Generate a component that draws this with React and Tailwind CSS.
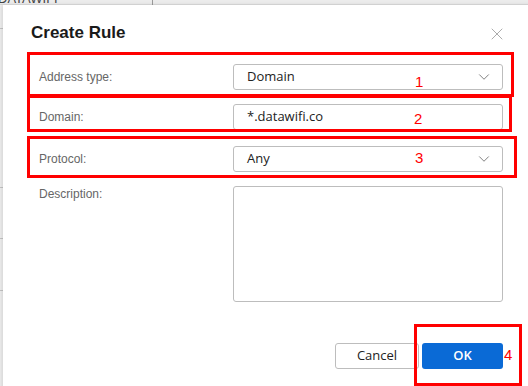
import { ChevronDown, X } from 'lucide-react';

const LABEL = 'w-[194px] shrink-0 text-[12px] text-[#666] font-["Liberation_Sans",Arial,sans-serif]';
const FIELD = 'w-[270px] h-[26px] rounded-[3px] border border-[#bdbdbd] bg-white flex items-center px-[13px] text-[13px] text-[#222] font-["Open_Sans","Noto_Sans",sans-serif]';

function Mark({ className, n, numClass }) {
  return (
    <div className={`absolute border-[3px] border-[#ff0000] pointer-events-none ${className}`}>
      <span className={`absolute text-[15px] leading-none text-[#ff0000] font-["Liberation_Sans",Arial,sans-serif] ${numClass}`}>{n}</span>
    </div>
  );
}

function SelectBox({ value }) {
  return (
    <div className={`${FIELD} justify-between`}>
      <span>{value}</span>
      <ChevronDown size={18} strokeWidth={1.1} className="text-[#666] mr-[-4px]" />
    </div>
  );
}

export default function App() {
  return (
    <div className="relative w-[528px] h-[386px] overflow-hidden bg-[#f3f3f3]">
      {/* page behind the dialog */}
      <div className="absolute left-0 top-0 w-full h-[5px] bg-[#ececec] border-b border-[#dcdcdc]" />
      <div className="absolute left-[152px] top-0 w-px h-[5px] bg-[#9a9a9a]" />
      <div className="absolute left-[-2px] top-[-8px] text-[13px] leading-[14px] text-[#444] font-['Liberation_Sans',Arial,sans-serif]">DATAWIFI</div>
      <div className="absolute left-0 top-[28px] w-[3px] h-px bg-[#c8c8c8]" />
      <div className="absolute left-0 top-[187px] w-[3px] h-px bg-[#c8c8c8]" />
      <div className="absolute left-0 top-[238px] w-[3px] h-px bg-[#c8c8c8]" />
      <div className="absolute left-0 top-[290px] w-[3px] h-px bg-[#c8c8c8]" />

      {/* dialog */}
      <div className="absolute left-[3px] top-[5px] w-[540px] h-[400px] bg-white shadow-[-2px_0_4px_rgba(0,0,0,0.12)]">
        <div className="flex items-center justify-between h-[20px] mt-[18px] pl-[28px] pr-[36px]">
          <h1 className="text-[17px] font-bold text-[#1a1a1a] leading-[20px] font-['Liberation_Sans',Arial,sans-serif]">Create Rule</h1>
          <X size={20} strokeWidth={1} className="text-[#9a9a9a] translate-y-[1px]" />
        </div>

        <div className="flex flex-col pl-[36px] pt-[21px]">
          <div className="flex items-center">
            <span className={LABEL}>Address type:</span>
            <SelectBox value="Domain" />
          </div>
          <div className="flex items-center mt-[14px]">
            <span className={LABEL}>Domain:</span>
            <div className={FIELD}>*.datawifi.co</div>
          </div>
          <div className="flex items-center mt-[16px]">
            <span className={LABEL}>Protocol:</span>
            <SelectBox value="Any" />
          </div>
          <div className="flex items-start mt-[14px]">
            <span className={`${LABEL} mt-[-1px]`}>Description:</span>
            <div className="w-[270px] h-[116px] rounded-[3px] border border-[#bdbdbd]" />
          </div>
          <div className="flex justify-end gap-[3px] w-[464px] mt-[41px]">
            <button className="w-[84px] h-[26px] rounded-[3px] border border-[#bdbdbd] bg-white text-[13px] text-[#222] font-['Open_Sans','Noto_Sans',sans-serif]">Cancel</button>
            <button className="w-[81px] h-[26px] rounded-[3px] bg-[#0a6ad6] text-[13px] font-semibold text-white font-['Open_Sans','Noto_Sans',sans-serif]">OK</button>
          </div>
        </div>
      </div>

      {/* annotations */}
      <Mark className="left-[27px] top-[52px] w-[487px] h-[45px]" n="1" numClass="left-[385px] top-[19px]" />
      <Mark className="left-[27px] top-[95px] w-[485px] h-[37px]" n="2" numClass="left-[384px] top-[13px]" />
      <Mark className="left-[27px] top-[136px] w-[490px] h-[42px]" n="3" numClass="left-[385px] top-[11px]" />
      <Mark className="left-[414px] top-[324px] w-[108px] h-[62px]" n="4" numClass="left-[87px] top-[20px]" />
    </div>
  );
}
